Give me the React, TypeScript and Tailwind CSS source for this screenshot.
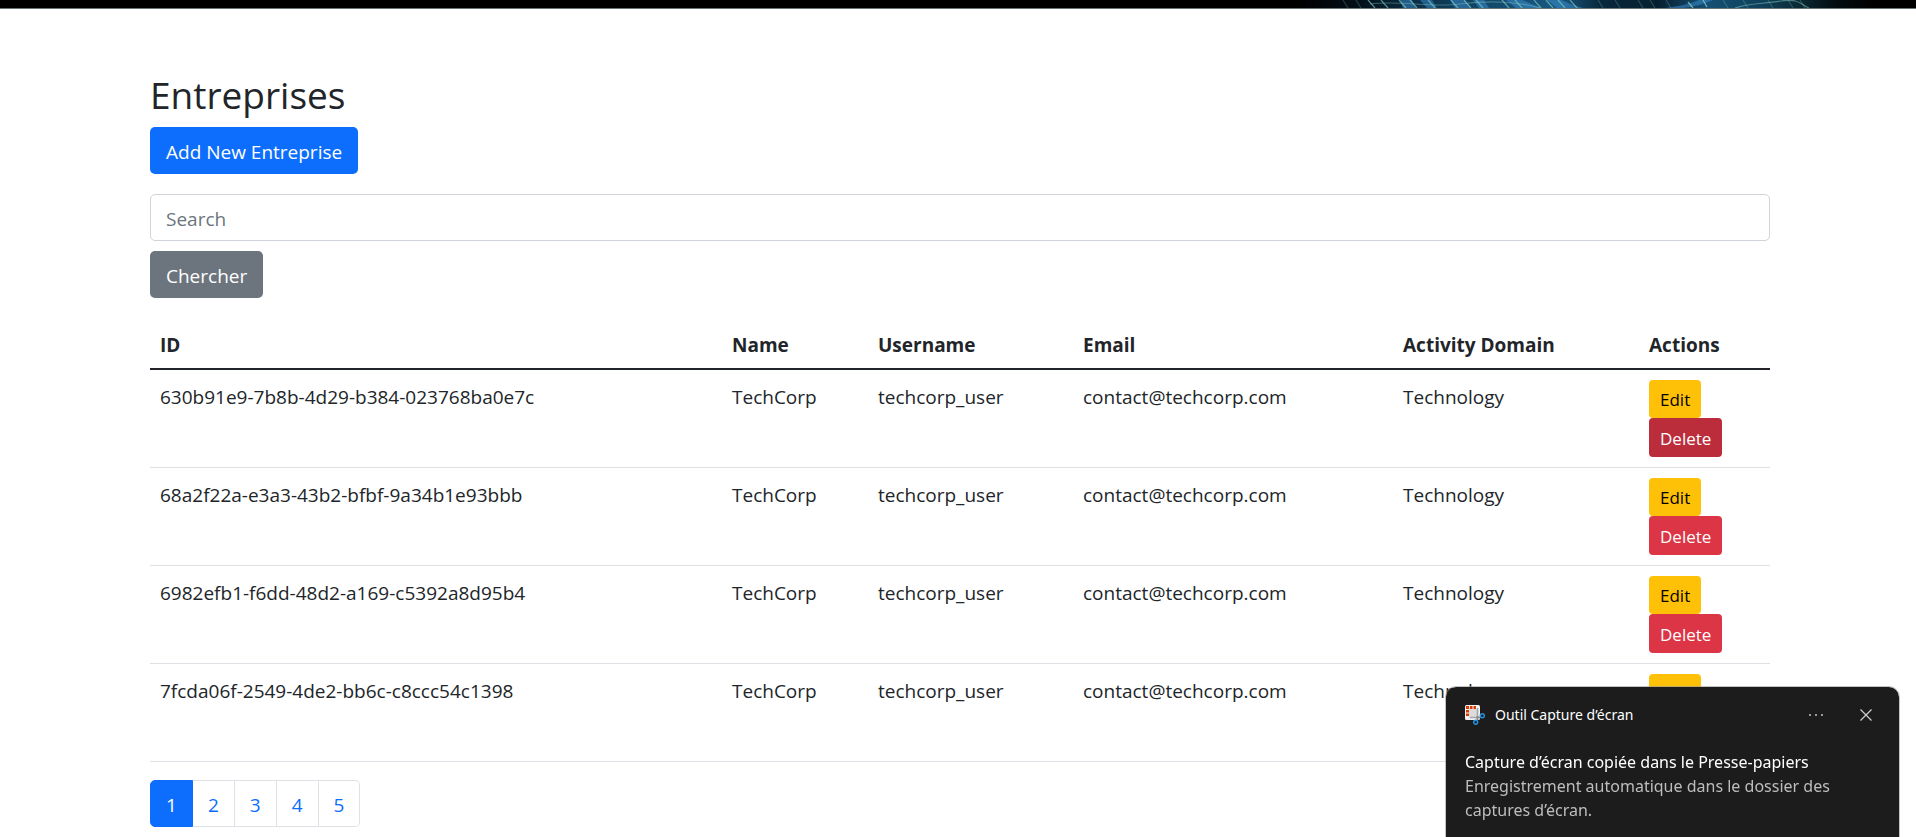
import React from "react";

type Company = { id: string; name: string; username: string; email: string; domain: string };

const ids = [
  "630b91e9-7b8b-4d29-b384-023768ba0e7c",
  "68a2f22a-e3a3-43b2-bfbf-9a34b1e93bbb",
  "6982efb1-f6dd-48d2-a169-c5392a8d95b4",
  "7fcda06f-2549-4de2-bb6c-c8ccc54c1398",
];

const companies: Company[] = ids.map((id) => ({
  id,
  name: "TechCorp",
  username: "techcorp_user",
  email: "contact@techcorp.com",
  domain: "Technology",
}));

const meshLines = [1372, 1385, 1403, 1414, 1432, 1455, 1468, 1480, 1506, 1519, 1538, 1550, 1562, 1574];
const backLines = [1345, 1358, 1600, 1617, 1640, 1652, 1668, 1725, 1745, 1770, 1790, 1802];

function Banner() {
  return (
    <div className="flex h-[9px] justify-end overflow-hidden border-b border-[#6b7275] bg-black">
      <svg className="h-2 w-[616px]" viewBox="1300 0 616 8" preserveAspectRatio="none" aria-hidden="true">
        <defs>
          <linearGradient id="glow" x1="0" x2="1" y1="0" y2="0">
            <stop offset="0" stopColor="#000" />
            <stop offset="0.1" stopColor="#03101a" />
            <stop offset="0.19" stopColor="#0a3048" />
            <stop offset="0.3" stopColor="#12486b" />
            <stop offset="0.42" stopColor="#185880" />
            <stop offset="0.49" stopColor="#08283c" />
            <stop offset="0.58" stopColor="#061f30" />
            <stop offset="0.66" stopColor="#154f74" />
            <stop offset="0.75" stopColor="#0f4059" />
            <stop offset="0.81" stopColor="#0a2a36" />
            <stop offset="0.87" stopColor="#030c10" />
            <stop offset="0.93" stopColor="#000" />
          </linearGradient>
        </defs>
        <rect x="1300" y="0" width="616" height="8" fill="url(#glow)" />
        <g fill="#3d8fd0" opacity="0.5">
          <path d="M1400 0h12l4 8h-13z" />
          <path d="M1420 0h12l5 8h-10z" />
          <path d="M1450 0h15l6 8h-16z" />
          <path d="M1473 0h11l5 8h-10z" />
          <path d="M1506 0h16c8 3 14 6 20 8h-26z" />
          <path d="M1547 0h14c8 3 14 6 22 8h-26z" />
          <path d="M1665 8c16-2 27-5 34-8h14c-9 4-20 7-30 8z" />
        </g>
        <g stroke="#86cfc4" strokeWidth="1.2" fill="none">
          {meshLines.map((x) => (
            <path key={x} opacity="0.65" d={`M${x - 4} 0L${x + 3} 8`} />
          ))}
          {backLines.map((x) => (
            <path key={x} opacity="0.25" d={`M${x - 2} 0L${x + 3} 8`} />
          ))}
          <path opacity="0.4" d="M1370 4c30-4 60 4 90 0s60-2 80 4" />
          <path opacity="0.8" d="M1688 2L1693 8M1703 0L1707 7" />
          <path opacity="0.5" d="M1735 8c14-5 28-4 46-7s20 4 28 7" />
        </g>
      </svg>
    </div>
  );
}

function SnippingIcon() {
  return (
    <svg className="size-5" viewBox="0 0 20 20" aria-hidden="true">
      <rect x="0" y="0" width="15" height="15" rx="1.5" fill="#f1f1f1" />
      <path d="M4 4h9v9H4z" fill="#dcdcdc" />
      <path
        d="M1 1h3v3H1zM5 1h2.5v3H5zM8.5 1H11v3H8.5zM1 5h3v2.5H1zM1 8.5h3V11H1z"
        fill="#d83b01"
      />
      <path d="M12.5 3v9.5H5" fill="none" stroke="#a6a6a6" strokeWidth="1.6" />
      <path d="M11 12.500h4M12.500 11v4" stroke="#8a8a8a" strokeWidth="1.6" />
      <g fill="none" stroke="#2491dc" strokeWidth="1.5">
        <circle cx="17.3" cy="10.7" r="2" />
        <circle cx="10.7" cy="17.3" r="2" />
      </g>
    </svg>
  );
}

function Toast() {
  return (
    <aside className="fixed right-[17px] bottom-0 h-[150px] w-[453px] rounded-t-[10px] bg-[#1c1c1c] px-[19px] pt-4 font-['Noto_Sans',sans-serif] text-base text-white outline outline-[#9a9a9a]/60">
      <header className="flex h-6 items-center">
        <SnippingIcon />
        <span className="ml-[10px] text-[14px] leading-6">Outil Capture d’écran</span>
        <button type="button" aria-label="Options" className="ml-auto flex h-6 w-6 items-center justify-center">
          <svg className="h-4 w-4" viewBox="0 0 16 16" fill="#c4c4c4" aria-hidden="true">
            <circle cx="2" cy="8" r="1" />
            <circle cx="8" cy="8" r="1" />
            <circle cx="14" cy="8" r="1" />
          </svg>
        </button>
        <button type="button" aria-label="Fermer" className="mr-[2px] ml-[26px] flex h-6 w-6 items-center justify-center">
          <svg className="h-3 w-3" viewBox="0 0 12 12" stroke="#d0d0d0" strokeWidth="1.2" aria-hidden="true">
            <path d="M0.5 0.5l11 11M11.5 0.5l-11 11" />
          </svg>
        </button>
      </header>
      <div className="mt-[23px] leading-6">
        <p>Capture d’écran copiée dans le Presse-papiers</p>
        <p className="text-[#bdbdbd]">Enregistrement automatique dans le dossier des captures d’écran.</p>
      </div>
    </aside>
  );
}

const textCell = "px-[10px] pt-3 pb-2";

export default function App() {
  return (
    <div className="min-h-screen bg-white font-['Open_Sans','Noto_Sans',sans-serif] text-[19px] leading-[30px] text-[#212529]">
      <Banner />
      <main className="pl-1">
        <div className="mx-auto max-w-[1650px] px-[15px] pt-[62px]">
          <h1 className="mb-2 text-[37px] leading-[48px]">Entreprises</h1>
          <button type="button" className="h-[47px] rounded-[5px] bg-[#0d6efd] px-4 pt-[2px] text-white">
            Add New Entreprise
          </button>
          <form className="mt-5 flex flex-col items-start gap-[10px]" onSubmit={(e) => e.preventDefault()}>
            <input
              type="text"
              aria-label="Search"
              placeholder="Search"
              className="h-[47px] w-full rounded-[5px] border border-[#ced4da] px-[15px] pt-[2px] placeholder:text-[#6c757d]"
            />
            <button type="submit" className="h-[47px] rounded-[5px] bg-[#6c757d] px-4 pt-[2px] text-white">
              Chercher
            </button>
          </form>
          <table className="mt-5 w-full table-fixed text-left">
            <colgroup>
              <col />
              <col className="w-[146px]" />
              <col className="w-[205px]" />
              <col className="w-[320px]" />
              <col className="w-[246px]" />
              <col className="w-[131px]" />
            </colgroup>
            <thead>
              <tr className="border-b-2 border-[#212529]">
                {["ID", "Name", "Username", "Email", "Activity Domain", "Actions"].map((h) => (
                  <th key={h} scope="col" className={`${textCell} font-bold`}>
                    {h}
                  </th>
                ))}
              </tr>
            </thead>
            <tbody>
              {companies.map((c, i) => (
                <tr key={c.id} className="border-b border-[#dee2e6] align-top">
                  <td className={textCell}>{c.id}</td>
                  <td className={textCell}>{c.name}</td>
                  <td className={textCell}>{c.username}</td>
                  <td className={textCell}>{c.email}</td>
                  <td className={textCell}>{c.domain}</td>
                  <td className="p-[10px]">
                    <div className="flex flex-col items-start text-[17px]">
                      <button type="button" className="h-[38px] rounded-[4px] bg-[#ffc107] px-[11px] pt-[2px] text-black">
                        Edit
                      </button>
                      <button
                        type="button"
                        className={`h-[39px] rounded-[4px] px-[11px] pt-[2px] text-white ${i === 0 ? "bg-[#bb2d3b]" : "bg-[#dc3545]"}`}
                      >
                        Delete
                      </button>
                    </div>
                  </td>
                </tr>
              ))}
            </tbody>
          </table>
          <nav aria-label="Pagination" className="mt-[18px]">
            <ul className="flex">
              {[1, 2, 3, 4, 5].map((n) => (
                <li key={n}>
                  <a
                    href={`#page-${n}`}
                    aria-current={n === 1 ? "page" : undefined}
                    className={`flex h-[47px] items-center border-y border-r px-[15px] pt-[2px] ${
                      n === 1
                        ? "rounded-l-[5px] border-l border-[#0d6efd] bg-[#0d6efd] text-white"
                        : n === 5
                          ? "rounded-r-[5px] border-[#dee2e6] text-[#0d6efd]"
                          : "border-[#dee2e6] text-[#0d6efd]"
                    }`}
                  >
                    {n}
                  </a>
                </li>
              ))}
            </ul>
          </nav>
        </div>
      </main>
      <Toast />
    </div>
  );
}
